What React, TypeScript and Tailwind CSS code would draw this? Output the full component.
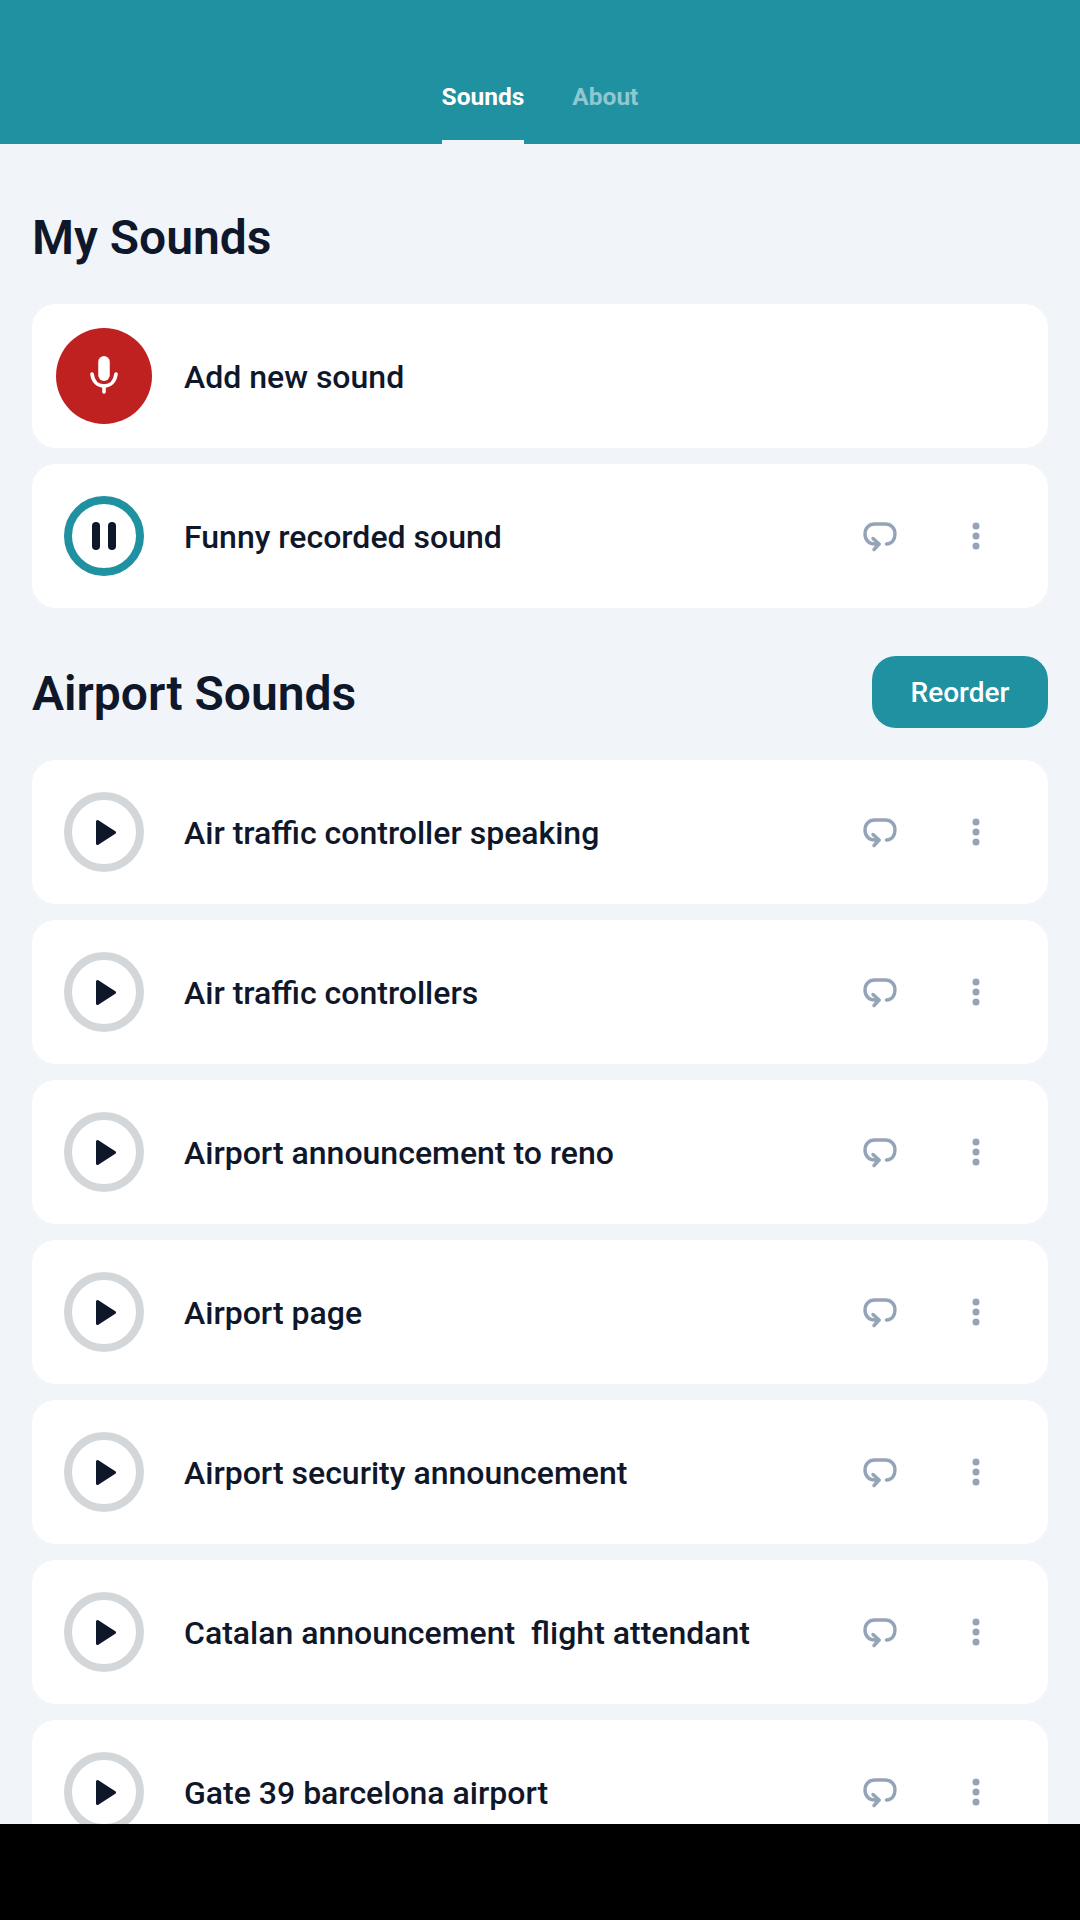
import React from 'react';

const airportSounds = [
    'Air traffic controller speaking',
    'Air traffic controllers',
    'Airport announcement to reno',
    'Airport page',
    'Airport security announcement',
    'Catalan announcement\u00a0 flight attendant',
    'Gate 39 barcelona airport'
];

function RepeatIcon() {
    return (
        <svg className="w-[36px] h-[32px]" viewBox="0 0 36 32" fill="none" stroke="#94a3b8" strokeWidth={3.4} strokeLinecap="round" strokeLinejoin="round">
            <path d="M25.5 24 C30.5 24 34 20 34 14 C34 8 30 4 24 4 L14 4 C8 4 4 8 4 14 C4 20 8 24 14 24 L18 24" />
            <path d="M12 18.5 L18 24 L13 29.5" />
        </svg>
    );
}

function DotsIcon() {
    return (
        <svg className="w-[10px] h-[28px]" viewBox="0 0 10 28" fill="#94a3b8">
            <circle cx="5" cy="4" r="3.5" />
            <circle cx="5" cy="14" r="3.5" />
            <circle cx="5" cy="24" r="3.5" />
        </svg>
    );
}

function SoundRow({ title, playing }: { title: string; playing?: boolean }) {
    return (
        <div className="flex items-center h-[144px] shrink-0 bg-white rounded-[24px] pl-[32px]">
            <div className={`flex items-center justify-center w-[80px] h-[80px] rounded-full border-[8px] ${playing ? 'border-[#1f91a1]' : 'border-[#d4d7da]'}`}>
                {playing ? (
                    <div className="flex gap-[8px]">
                        <span className="w-[8px] h-[28px] rounded-full bg-[#0f172a]" />
                        <span className="w-[8px] h-[28px] rounded-full bg-[#0f172a]" />
                    </div>
                ) : (
                    <svg className="w-[20px] h-[25px] ml-[4px]" viewBox="0 0 20 25" fill="#0f172a">
                        <path d="M1.5 1.5 L18.5 12.5 L1.5 23.5 Z" stroke="#0f172a" strokeWidth={3} strokeLinejoin="round" />
                    </svg>
                )}
            </div>
            <span className="ml-[40px] flex-1 pt-[1px] text-[32px] font-medium text-[#0f172a] whitespace-pre">{title}</span>
            <div className="flex items-center">
                <RepeatIcon />
                <div className="ml-[74px] mr-[67px]">
                    <DotsIcon />
                </div>
            </div>
        </div>
    );
}

export default function App() {
    return (
        <div className="h-[1920px] bg-black overflow-hidden" style={{ fontFamily: 'Roboto, sans-serif' }}>
            <div className="h-[1824px] overflow-hidden bg-[#f1f5f9]">
                {/* Header */}
                <header className="flex justify-center items-end gap-[48px] h-[144px] bg-[#1f91a1]">
                    <div className="flex items-center h-[92px] pt-[2px] border-b-[4px] border-[#f1f5f9] text-[24.5px] font-bold text-white">Sounds</div>
                    <div className="flex items-center h-[92px] pt-[2px] border-b-[4px] border-transparent text-[24.5px] font-bold text-white/50">About</div>
                </header>

                <main className="px-[32px]">
                    {/* My Sounds */}
                    <h1 className="flex items-center h-[72px] mt-[58px] mb-[-2px] text-[48px] font-semibold text-[#0f172a]">My Sounds</h1>
                    <div className="flex flex-col gap-[16px] mt-[32px]">
                        <div className="flex items-center h-[144px] bg-white rounded-[24px] pl-[24px]">
                            <div className="flex items-center justify-center w-[96px] h-[96px] rounded-full bg-[#bf2121]">
                                <svg className="w-[32px] h-[38px] mb-[2px]" viewBox="0 0 32 38" fill="none" stroke="#fff" strokeLinecap="round">
                                    <rect x="10.25" y="0" width="11.5" height="25" rx="5.75" fill="#fff" stroke="none" />
                                    <path d="M4 18 C5 26 10 30 16 30 C22 30 27 26 28 18" strokeWidth={3.6} />
                                    <path d="M16 30 L16 36" strokeWidth={3.6} />
                                </svg>
                            </div>
                            <span className="ml-[32px] pt-[1px] text-[32px] font-medium text-[#0f172a]">Add new sound</span>
                        </div>
                        <SoundRow title="Funny recorded sound" playing />
                    </div>

                    {/* Airport Sounds */}
                    <div className="flex items-center justify-between h-[72px] mt-[48px]">
                        <h2 className="pt-[4px] text-[48px] leading-[68px] font-semibold text-[#0f172a]">Airport Sounds</h2>
                        <button className="w-[176px] h-[72px] rounded-[24px] bg-[#1f91a1] pt-[2px] text-[28px] font-medium text-white">Reorder</button>
                    </div>
                    <div className="flex flex-col gap-[16px] mt-[32px]">
                        {airportSounds.map((title) => (
                            <SoundRow key={title} title={title} />
                        ))}
                    </div>
                </main>
            </div>
        </div>
    );
}
